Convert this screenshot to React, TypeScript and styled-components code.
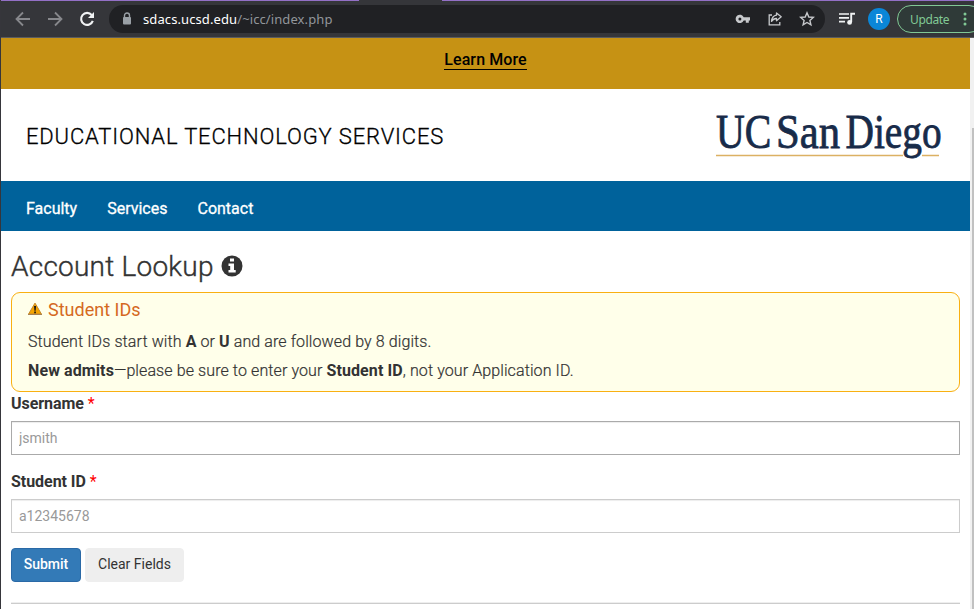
import React from "react";
import styled, { createGlobalStyle } from "styled-components";

const GlobalStyle = createGlobalStyle`
  * { box-sizing: border-box; }
  html, body { margin: 0; height: 100%; overflow: hidden; }
  body { font-family: Roboto, sans-serif; color: #333; background: #fff; }
`;

const Window = styled.div`
  width: 974px;
  height: 609px;
  display: flex;
  flex-direction: column;
  overflow: hidden;
  border-left: 1px solid #36363b;
`;

const TabEdge = styled.div`
  flex: none;
  height: 1px;
  padding-left: 358px;
  background: #9370c6;
`;

const ActiveTab = styled.div`
  width: 83px;
  height: 1px;
  background: #35363a;
`;

const Toolbar = styled.header`
  flex: none;
  height: 37px;
  display: flex;
  align-items: center;
  background: #35363a;
  border-bottom: 1px solid #5b5c5f;
  overflow: hidden;
`;

const NavButtons = styled.div`
  width: 108px;
  flex: none;
  display: flex;
  align-items: center;
  gap: 16px;
  padding-left: 14px;
`;

const AddressBar = styled.div`
  width: 716px;
  height: 28px;
  flex: none;
  display: flex;
  align-items: center;
  padding: 0 10px 0 13px;
  border-radius: 14px;
  background: #202124;
`;

const Url = styled.div`
  flex: 1;
  margin-left: 11px;
  font: 13px/20px "Noto Sans", sans-serif;
  letter-spacing: 0.1px;
  color: #92969b;
  white-space: nowrap;
`;

const Host = styled.span`
  color: #fff;
`;

const AddressActions = styled.div`
  display: flex;
  align-items: center;
  gap: 16px;
`;

const BrowserActions = styled.div`
  display: flex;
  align-items: center;
  flex: none;
  margin-left: 13px;
`;

const Avatar = styled.div`
  width: 22px;
  height: 22px;
  margin: 0 7px 0 12px;
  border-radius: 50%;
  background: #0a86d8;
  color: #fff;
  font-size: 12px;
  line-height: 22px;
  text-align: center;
`;

const UpdateButton = styled.button`
  width: 86px;
  height: 28px;
  flex: none;
  display: flex;
  align-items: center;
  gap: 14px;
  padding: 0 0 0 12px;
  border: 1px solid #81c995;
  border-radius: 14px;
  background: #2f3a38;
  color: #81c995;
  font: 12px "Noto Sans", sans-serif;
  letter-spacing: -0.35px;
`;

const Viewport = styled.div`
  flex: 1;
  display: flex;
  min-height: 0;
`;

const Page = styled.div`
  width: 969px;
  flex: none;
  overflow: hidden;
`;

const ScrollTrack = styled.div`
  flex: 1;
  padding: 90px 0 0 2px;
  background: #f1f1f1;
`;

const ScrollThumb = styled.div`
  height: 100%;
  background: #c1c1c1;
`;

const AlertBar = styled.div`
  height: 51px;
  padding-top: 12px;
  text-align: center;
  background: #c69214;
`;

const AlertLink = styled.a`
  display: inline-block;
  height: 20px;
  line-height: 19px;
  font-size: 16px;
  font-weight: 500;
  letter-spacing: 0.1px;
  color: #000;
  border-bottom: 1px solid #000;
`;

const Masthead = styled.div`
  height: 92px;
  display: flex;
  align-items: center;
  justify-content: space-between;
  padding: 0 28px 0 25px;
`;

const SiteName = styled.div`
  padding-top: 2px;
  font-size: 22px;
  font-weight: 300;
  letter-spacing: 0.84px;
  color: #000;
  -webkit-text-stroke: 0.3px;
`;

const Logo = styled.svg`
  display: block;
  overflow: visible;
  margin-top: 2px;
`;

const NavBar = styled.nav`
  height: 50px;
  display: flex;
  align-items: center;
  gap: 30px;
  padding: 5px 25px 0;
  background: #00629b;
`;

const NavLink = styled.a`
  font-size: 16px;
  font-weight: 400;
  line-height: 20px;
  color: #fff;
  -webkit-text-stroke: 0.3px;
`;

const Main = styled.main`
  width: 949px;
  margin-left: 10px;
`;

const Title = styled.h1`
  height: 61px;
  margin: 0;
  padding-top: 19px;
  display: flex;
  gap: 7px;
  font-size: 28px;
  line-height: 34px;
  font-weight: 300;
  letter-spacing: 0.23px;
  -webkit-text-stroke: 0.4px;
`;

const TitleIcon = styled.svg`
  margin-top: 5px;
`;

const Notice = styled.section`
  height: 100px;
  padding: 3px 16px;
  border: 1px solid #f9b012;
  border-radius: 9px;
  background: #ffffea;
`;

const NoticeTitle = styled.h2`
  display: flex;
  align-items: center;
  gap: 5px;
  height: 27px;
  margin: 0 0 4px;
  font-size: 18px;
  font-weight: 400;
  color: #d5691e;
`;

const NoticeText = styled.p`
  margin: 0;
  height: 29px;
  font-size: 16px;
  font-weight: 300;
  line-height: 29px;
  letter-spacing: 0.1px;
  -webkit-text-stroke: 0.2px;
`;

const Strong = styled.b`
  font-weight: 700;
  -webkit-text-stroke: 0;
`;

const Label = styled.label`
  display: block;
  height: 29px;
  font-size: 16px;
  font-weight: 700;
  line-height: 23px;
  letter-spacing: -0.05px;
`;

const Required = styled.span`
  font-weight: 400;
  color: #f00;
`;

const Field = styled.input<{ $border: string }>`
  display: block;
  width: 100%;
  height: 34px;
  margin-bottom: 15px;
  padding: 0 7px;
  border: 1px solid ${(p) => p.$border};
  border-radius: 0;
  box-shadow: inset 0 1px 1px rgba(0, 0, 0, 0.075);
  font: 14px Roboto, sans-serif;
  &::placeholder {
    color: #999;
    opacity: 1;
  }
`;

const Actions = styled.div`
  display: flex;
  gap: 4px;
`;

const Button = styled.button<{ $primary?: boolean }>`
  width: ${(p) => (p.$primary ? 70 : 99)}px;
  height: 34px;
  padding: 0 0 2px;
  border: 1px solid ${(p) => (p.$primary ? "#2a69a6" : "#eee")};
  border-radius: 4px;
  background: ${(p) => (p.$primary ? "#337ab7" : "#eee")};
  color: ${(p) => (p.$primary ? "#fff" : "#333")};
  font: ${(p) => (p.$primary ? 500 : 400)} 14px Roboto, sans-serif;
`;

const Divider = styled.hr`
  height: 2px;
  margin: 20px 0 0;
  border: 0;
  border-top: 1px solid #eee;
  background: #ccc;
`;

const Arrow = ({ flip }: { flip?: boolean }) => (
  <svg width="16" height="16" viewBox="0 0 16 16" fill="none" stroke="#87888c" strokeWidth="1.8">
    <path d={flip ? "M1 8H14M8 1.5L14.5 8L8 14.5" : "M15 8H2M8 1.5L1.5 8L8 14.5"} />
  </svg>
);

const Reload = () => (
  <svg width="16" height="16" viewBox="0 0 16 16">
    <path d="M12.7 4A6 6 0 1 0 13.8 9.8" fill="none" stroke="#f1f3f4" strokeWidth="2.1" />
    <path d="M15 1V7H9Z" fill="#f1f3f4" />
  </svg>
);

const Lock = () => (
  <svg width="10" height="14" viewBox="0 0 10 14">
    <path d="M2.5 6V3.5a2.5 2.5 0 0 1 5 0V6" fill="none" stroke="#9aa0a6" strokeWidth="1.4" />
    <rect x="1" y="5" width="8" height="7.5" rx="1" fill="#9aa0a6" />
  </svg>
);

const Key = () => (
  <svg width="16" height="16" viewBox="0 0 16 16">
    <path
      fill="#c7c9cc"
      fillRule="evenodd"
      d="M8.7 6.3H15V9.5H13.8V11.8H10.8V9.5H8.7A4.2 4.2 0 1 1 8.7 6.3ZM4.9 6.4a1.5 1.5 0 1 0 0 3a1.5 1.5 0 1 0 0-3Z"
    />
  </svg>
);

const Share = () => (
  <svg width="16" height="16" viewBox="0 0 16 16" fill="none" stroke="#c7c9cc" strokeWidth="1.3">
    <path d="M5 4H2.2V13.8H12.8V11" />
    <path d="M9.5 2L14.2 5.8L9.5 9.7V7.5Q6.4 7.4 4.5 10.4Q5.1 4.7 9.5 4.2Z" strokeLinejoin="round" />
  </svg>
);

const Star = () => (
  <svg width="16" height="16" viewBox="0 0 16 16" fill="none" stroke="#c7c9cc" strokeWidth="1.4">
    <path d="M8 1.8L9.8 6L14.3 6.4L10.9 9.4L11.9 13.8L8 11.5L4.1 13.8L5.1 9.4L1.7 6.4L6.2 6Z" />
  </svg>
);

const Queue = () => (
  <svg width="18" height="16" viewBox="0 0 18 16">
    <path d="M1 3H11M1 6.8H11M1 10.6H7" stroke="#f1f3f4" strokeWidth="1.7" />
    <path d="M13.2 11V2.8H17" fill="none" stroke="#f1f3f4" strokeWidth="1.9" />
    <circle cx="11.6" cy="11.4" r="2.4" fill="#f1f3f4" />
  </svg>
);

const Dots = () => (
  <svg width="4" height="16" viewBox="0 0 4 16" fill="#81c995">
    <circle cx="2" cy="3" r="1.5" />
    <circle cx="2" cy="8" r="1.5" />
    <circle cx="2" cy="13" r="1.5" />
  </svg>
);

const Warning = () => (
  <svg width="15" height="14" viewBox="0 0 15 14">
    <path d="M7 .1L13.4 11H.6Z" fill="#f5a400" stroke="#c58a2d" strokeLinejoin="round" />
    <path d="M0 11.5H14" stroke="#a88150" strokeWidth="1" />
    <path d="M6 3H8.1L7.7 7.8H6.4ZM6.2 8.6H7.9V10.3H6.2Z" fill="#221b10" />
  </svg>
);

const UniversityLogo = () => (
  <Logo width="226" height="46" viewBox="0 0 226 46" role="img" aria-label="UC San Diego">
    <g fill="#182b49" stroke="#182b49" strokeWidth=".8" fontFamily="Liberation Serif, serif" fontSize="48">
      <text transform="translate(0 34.5) scale(.83 1)">UC</text>
      <text transform="translate(60 34.5) scale(.89 1)">San</text>
      <text transform="translate(129.5 34.5) scale(.82 1)">Diego</text>
    </g>
    <path d="M0 42.5H187M206 42.5H223" stroke="#dcb163" strokeWidth="1.3" />
  </Logo>
);

export default function App() {
  return (
    <>
      <GlobalStyle />
      <Window>
        <TabEdge>
          <ActiveTab />
        </TabEdge>
        <Toolbar>
          <NavButtons>
            <Arrow />
            <Arrow flip />
            <Reload />
          </NavButtons>
          <AddressBar>
            <Lock />
            <Url>
              <Host>sdacs.ucsd.edu</Host>/~icc/index.php
            </Url>
            <AddressActions>
              <Key />
              <Share />
              <Star />
            </AddressActions>
          </AddressBar>
          <BrowserActions>
            <Queue />
            <Avatar>R</Avatar>
            <UpdateButton>
              Update
              <Dots />
            </UpdateButton>
          </BrowserActions>
        </Toolbar>
        <Viewport>
          <Page>
            <AlertBar>
              <AlertLink>Learn More</AlertLink>
            </AlertBar>
            <Masthead>
              <SiteName>EDUCATIONAL TECHNOLOGY SERVICES</SiteName>
              <UniversityLogo />
            </Masthead>
            <NavBar>
              <NavLink>Faculty</NavLink>
              <NavLink>Services</NavLink>
              <NavLink>Contact</NavLink>
            </NavBar>
            <Main>
              <Title>
                Account Lookup
                <TitleIcon width="22" height="22" viewBox="0 0 22 22">
                  <circle cx="11" cy="11" r="10.5" fill="#333" />
                  <path d="M9 3.5H13V6.5H9ZM7.5 8.5H13V15H14.7V17.5H7.5V15H9.2V11H7.5Z" fill="#fff" />
                </TitleIcon>
              </Title>
              <Notice>
                <NoticeTitle>
                  <Warning />
                  Student IDs
                </NoticeTitle>
                <NoticeText>
                  Student IDs start with <Strong>A</Strong> or <Strong>U</Strong> and are followed by 8 digits.
                </NoticeText>
                <NoticeText>
                  <Strong>New admits</Strong>—please be sure to enter your <Strong>Student ID</Strong>, not your
                  Application ID.
                </NoticeText>
              </Notice>
              <Label>
                Username <Required>*</Required>
              </Label>
              <Field $border="#aaa" placeholder="jsmith" />
              <Label>
                Student ID <Required>*</Required>
              </Label>
              <Field $border="#ccc" placeholder="a12345678" />
              <Actions>
                <Button $primary>Submit</Button>
                <Button>Clear Fields</Button>
              </Actions>
              <Divider />
            </Main>
          </Page>
          <ScrollTrack>
            <ScrollThumb />
          </ScrollTrack>
        </Viewport>
      </Window>
    </>
  );
}
